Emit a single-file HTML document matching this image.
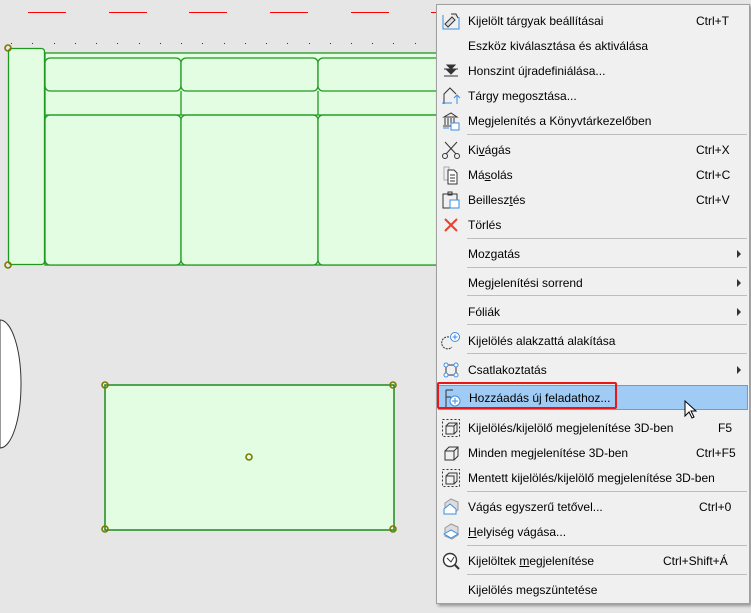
<!DOCTYPE html>
<html><head><meta charset="utf-8"><style>
body{margin:0;width:751px;height:613px;overflow:hidden;background:#e6e6e6;font-family:"Liberation Sans",sans-serif;position:relative}
svg.c{position:absolute;left:0;top:0}
.menu{position:absolute;left:436px;top:4px;width:312px;height:598px;background:#f0f0f0;border:1px solid #a0a0a0;box-shadow:2px 2px 3px rgba(0,0,0,.35);font-size:12px;color:#000}
.r{position:absolute;left:0;width:312px;height:25px;line-height:26px}
.r .t{position:absolute;left:31px}
.r .k{position:absolute;left:259px}
.r .a{position:absolute;left:300px;top:9px;width:0;height:0;border-left:4px solid #333;border-top:4px solid transparent;border-bottom:4px solid transparent}
.s{position:absolute;left:30px;width:280px;height:1px;background:#bdbdbd}
.ic{position:absolute;left:4px;top:3px;width:20px;height:20px}
.hl{background:#9fcbf5;border:1px solid #5e9fdf;left:1px;width:308px;height:23px;line-height:24px}
</style></head><body>
<svg class="c" width="440" height="613">
<g stroke="#f00" stroke-width="1">
<line x1="28" y1="12.5" x2="66" y2="12.5"/><line x1="109" y1="12.5" x2="147" y2="12.5"/><line x1="189" y1="12.5" x2="227" y2="12.5"/><line x1="270" y1="12.5" x2="308" y2="12.5"/><line x1="351" y1="12.5" x2="389" y2="12.5"/><line x1="431" y1="12.5" x2="440" y2="12.5"/>
</g>
<g fill="#333">
<rect x="11" y="43" width="1" height="1"/><rect x="32" y="43" width="1" height="1"/><rect x="54" y="43" width="1" height="1"/><rect x="75" y="43" width="1" height="1"/><rect x="96" y="43" width="1" height="1"/><rect x="117" y="43" width="1" height="1"/><rect x="139" y="43" width="1" height="1"/><rect x="160" y="43" width="1" height="1"/><rect x="181" y="43" width="1" height="1"/><rect x="202" y="43" width="1" height="1"/><rect x="224" y="43" width="1" height="1"/><rect x="245" y="43" width="1" height="1"/><rect x="266" y="43" width="1" height="1"/><rect x="287" y="43" width="1" height="1"/><rect x="309" y="43" width="1" height="1"/><rect x="330" y="43" width="1" height="1"/><rect x="351" y="43" width="1" height="1"/><rect x="372" y="43" width="1" height="1"/><rect x="393" y="43" width="1" height="1"/><rect x="415" y="43" width="1" height="1"/>
</g>
<g fill="#e3fde3" stroke="#1f9a1f" stroke-width="1.3">
<rect x="8.5" y="48.5" width="36" height="216" rx="3"/>
<rect x="45" y="53" width="400" height="212"/>
<rect x="45" y="58" width="136" height="33" rx="5"/><rect x="181" y="58" width="137" height="33" rx="5"/><rect x="318" y="58" width="130" height="33" rx="5"/>
<rect x="45" y="115" width="136" height="150" rx="5"/><rect x="181" y="115" width="137" height="150" rx="5"/><rect x="318" y="115" width="130" height="150" rx="5"/>
<line x1="45" y1="115" x2="440" y2="115"/><line x1="181" y1="91" x2="181" y2="115"/><line x1="318" y1="91" x2="318" y2="115"/>
</g>
<path d="M0 320 A21 64 0 0 1 0 448 Z" fill="#fff" stroke="#333" stroke-width="1"/>
<rect x="105" y="385" width="289" height="145" fill="#e3fde3" stroke="#1f8a1f" stroke-width="1.5"/>
<g fill="none" stroke="#7a7a00" stroke-width="1.6">
<circle cx="8" cy="48" r="3"/><circle cx="8" cy="265" r="3"/>
<circle cx="105" cy="385" r="3"/><circle cx="393" cy="385" r="3"/><circle cx="105" cy="529" r="3"/><circle cx="393" cy="529" r="3"/><circle cx="249" cy="457" r="3"/>
</g>
</svg>
<div class="menu">
<div class="r" style="top:3px"><svg class="ic" viewBox="0 0 20 20"><path d="M2 4v14h16V6" fill="none" stroke="#3a8ee6"/><path d="M4 13l7-7 3 3-7 7z M10 3l5 0 2 4" fill="#ddd" stroke="#333"/></svg><span class="t">Kijelölt tárgyak beállításai</span><span class="k">Ctrl+T</span></div>
<div class="r" style="top:28px"><span class="t">Eszköz kiválasztása és aktiválása</span></div>
<div class="r" style="top:53px"><svg class="ic" viewBox="0 0 20 20"><path d="M3 8h14M3 15h14M6 4h8l-4 4z M6 9h8l-4 4z" fill="#333" stroke="#333"/></svg><span class="t">Honszint újradefiniálása...</span></div>
<div class="r" style="top:78px"><svg class="ic" viewBox="0 0 20 20"><path d="M3 18V8l6-6 6 6" fill="none" stroke="#333"/><path d="M1 17h10M16 18V9m-3 3l3-3 3 3" fill="none" stroke="#3a8ee6"/></svg><span class="t">Tárgy megosztása...</span></div>
<div class="r" style="top:103px"><svg class="ic" viewBox="0 0 20 20"><path d="M3 6h13L10 2zM4 7v7M7 7v7M10 7v7M13 7v7M2 15h14" fill="none" stroke="#333"/><rect x="10" y="12" width="8" height="7" fill="#fff" stroke="#3a8ee6"/><path d="M2 17h6" stroke="#3a8ee6"/></svg><span class="t">Megjelenítés a Könyvtárkezelőben</span></div>
<div class="s" style="top:129px"></div>
<div class="r" style="top:132px"><svg class="ic" viewBox="0 0 20 20"><path d="M4 2l11 12M16 2L5 14" stroke="#333" fill="none"/><circle cx="4" cy="16" r="2.5" fill="none" stroke="#333"/><circle cx="16" cy="16" r="2.5" fill="none" stroke="#333"/></svg><span class="t">Ki<u>v</u>ágás</span><span class="k">Ctrl+X</span></div>
<div class="r" style="top:157px"><svg class="ic" viewBox="0 0 20 20"><path d="M3 2h5v13H3z" fill="none" stroke="#aaa"/><path d="M7 5h6l3 3v11H7z M9 10h5M9 13h5M9 16h5" fill="#fff" stroke="#333"/></svg><span class="t">Má<u>s</u>olás</span><span class="k">Ctrl+C</span></div>
<div class="r" style="top:182px"><svg class="ic" viewBox="0 0 20 20"><path d="M2 4h14v14H2z M7 2h4v3H7z" fill="none" stroke="#333"/><rect x="9" y="10" width="9" height="8" fill="#fff" stroke="#3a8ee6"/></svg><span class="t">Beillesz<u>t</u>és</span><span class="k">Ctrl+V</span></div>
<div class="r" style="top:207px"><svg class="ic" viewBox="0 0 20 20"><path d="M4 4l12 12M16 4L4 16" stroke="#e8412c" stroke-width="2"/></svg><span class="t">Törlés</span></div>
<div class="s" style="top:233px"></div>
<div class="r" style="top:236px"><span class="t">Mozgatás</span><span class="a"></span></div>
<div class="s" style="top:262px"></div>
<div class="r" style="top:265px"><span class="t">Megjelenítési sorrend</span><span class="a"></span></div>
<div class="s" style="top:290px"></div>
<div class="r" style="top:294px"><span class="t">Fóliák</span><span class="a"></span></div>
<div class="s" style="top:319px"></div>
<div class="r" style="top:323px"><svg class="ic" viewBox="0 0 20 20"><path d="M8 6a6 6 0 1 0 3 10" fill="none" stroke="#333" stroke-dasharray="2 1"/><circle cx="14" cy="6" r="4.5" fill="#fff" stroke="#3a8ee6"/><path d="M14 3.5v5M11.5 6h5" stroke="#3a8ee6"/></svg><span class="t">Kijelölés alakzattá alakítása</span></div>
<div class="s" style="top:348px"></div>
<div class="r" style="top:352px"><svg class="ic" viewBox="0 0 20 20"><path d="M5 5h10M5 15h10M5 5v10M15 5v10" stroke="#333"/><g fill="#fff" stroke="#3a8ee6"><circle cx="5" cy="5" r="2"/><circle cx="15" cy="5" r="2"/><circle cx="5" cy="15" r="2"/><circle cx="15" cy="15" r="2"/></g></svg><span class="t">Csatlakoztatás</span><span class="a"></span></div>
<div class="r hl" style="top:380px"><svg class="ic" viewBox="0 0 20 20" style="top:2px;left:3px"><path d="M4 2v17M4 2h7M4 9h5" stroke="#333" fill="none"/><circle cx="13" cy="13" r="5" fill="#fff" stroke="#3a8ee6"/><path d="M13 10v6M10 13h6" stroke="#3a8ee6"/></svg><span class="t" style="left:30px">Hozzáadás új feladathoz...</span></div>
<div style="position:absolute;left:0;top:377px;width:180px;height:27px;border:2px solid #e81818;border-radius:2px;box-sizing:border-box"></div>
<svg style="position:absolute;left:247px;top:395px" width="14" height="20" viewBox="0 0 14 20"><path d="M1 1v15l4-4 3 6 2-1-3-6h5z" fill="#fff" stroke="#000"/></svg>
<div class="r" style="top:410px"><svg class="ic" viewBox="0 0 20 20"><rect x="1.5" y="1.5" width="17" height="17" fill="none" stroke="#333" stroke-dasharray="2 2"/><path d="M5 8h8v8H5zM5 8l3-3h8v8l-3 3M13 8l3-3" fill="none" stroke="#333"/></svg><span class="t">Kijelölés/kijelölő megjelenítése 3D-ben</span><span class="k" style="left:281px">F5</span></div>
<div class="r" style="top:435px"><svg class="ic" viewBox="0 0 20 20"><path d="M4 8h9v9H4zM4 8l4-4h9v9l-4 4M13 8l4-4" fill="none" stroke="#333"/></svg><span class="t">Minden megjelenítése 3D-ben</span><span class="k">Ctrl+F5</span></div>
<div class="r" style="top:460px"><svg class="ic" viewBox="0 0 20 20"><rect x="1.5" y="1.5" width="17" height="17" fill="none" stroke="#333" stroke-dasharray="2 2"/><path d="M5 8h8v8H5zM5 8l3-3h8v8l-3 3" fill="none" stroke="#333"/></svg><span class="t">Mentett kijelölés/kijelölő megjelenítése 3D-ben</span></div>
<div class="s" style="top:486px"></div>
<div class="r" style="top:489px"><svg class="ic" viewBox="0 0 20 20"><path d="M4 6l6-4 7 3v8l-6 4-7-3z" fill="#ddd" stroke="#999"/><path d="M3 12l6-5 6 5v5H3z" fill="#fff" stroke="#3a8ee6"/></svg><span class="t">Vágás egyszerű tetővel...</span><span class="k" style="left:262px">Ctrl+0</span></div>
<div class="r" style="top:514px"><svg class="ic" viewBox="0 0 20 20"><path d="M4 6l6-4 7 3v8l-6 4-7-3z" fill="#ddd" stroke="#999"/><path d="M3 12l7-4 7 4-7 4z" fill="#fff" stroke="#3a8ee6"/></svg><span class="t"><u>H</u>elyiség vágása...</span></div>
<div class="s" style="top:540px"></div>
<div class="r" style="top:543px"><svg class="ic" viewBox="0 0 20 20"><circle cx="9" cy="9" r="6.5" fill="#fff" stroke="#333" stroke-width="1.4"/><path d="M14 14l4 4" stroke="#333" stroke-width="2"/><path d="M6 7l4 4 3-5" stroke="#333" fill="none"/></svg><span class="t">Kijelöltek <u>m</u>egjelenítése</span><span class="k" style="left:226px">Ctrl+Shift+Á</span></div>
<div class="s" style="top:569px"></div>
<div class="r" style="top:572px"><span class="t">Kijelölés megszüntetése</span></div>
</div>
</body></html>
